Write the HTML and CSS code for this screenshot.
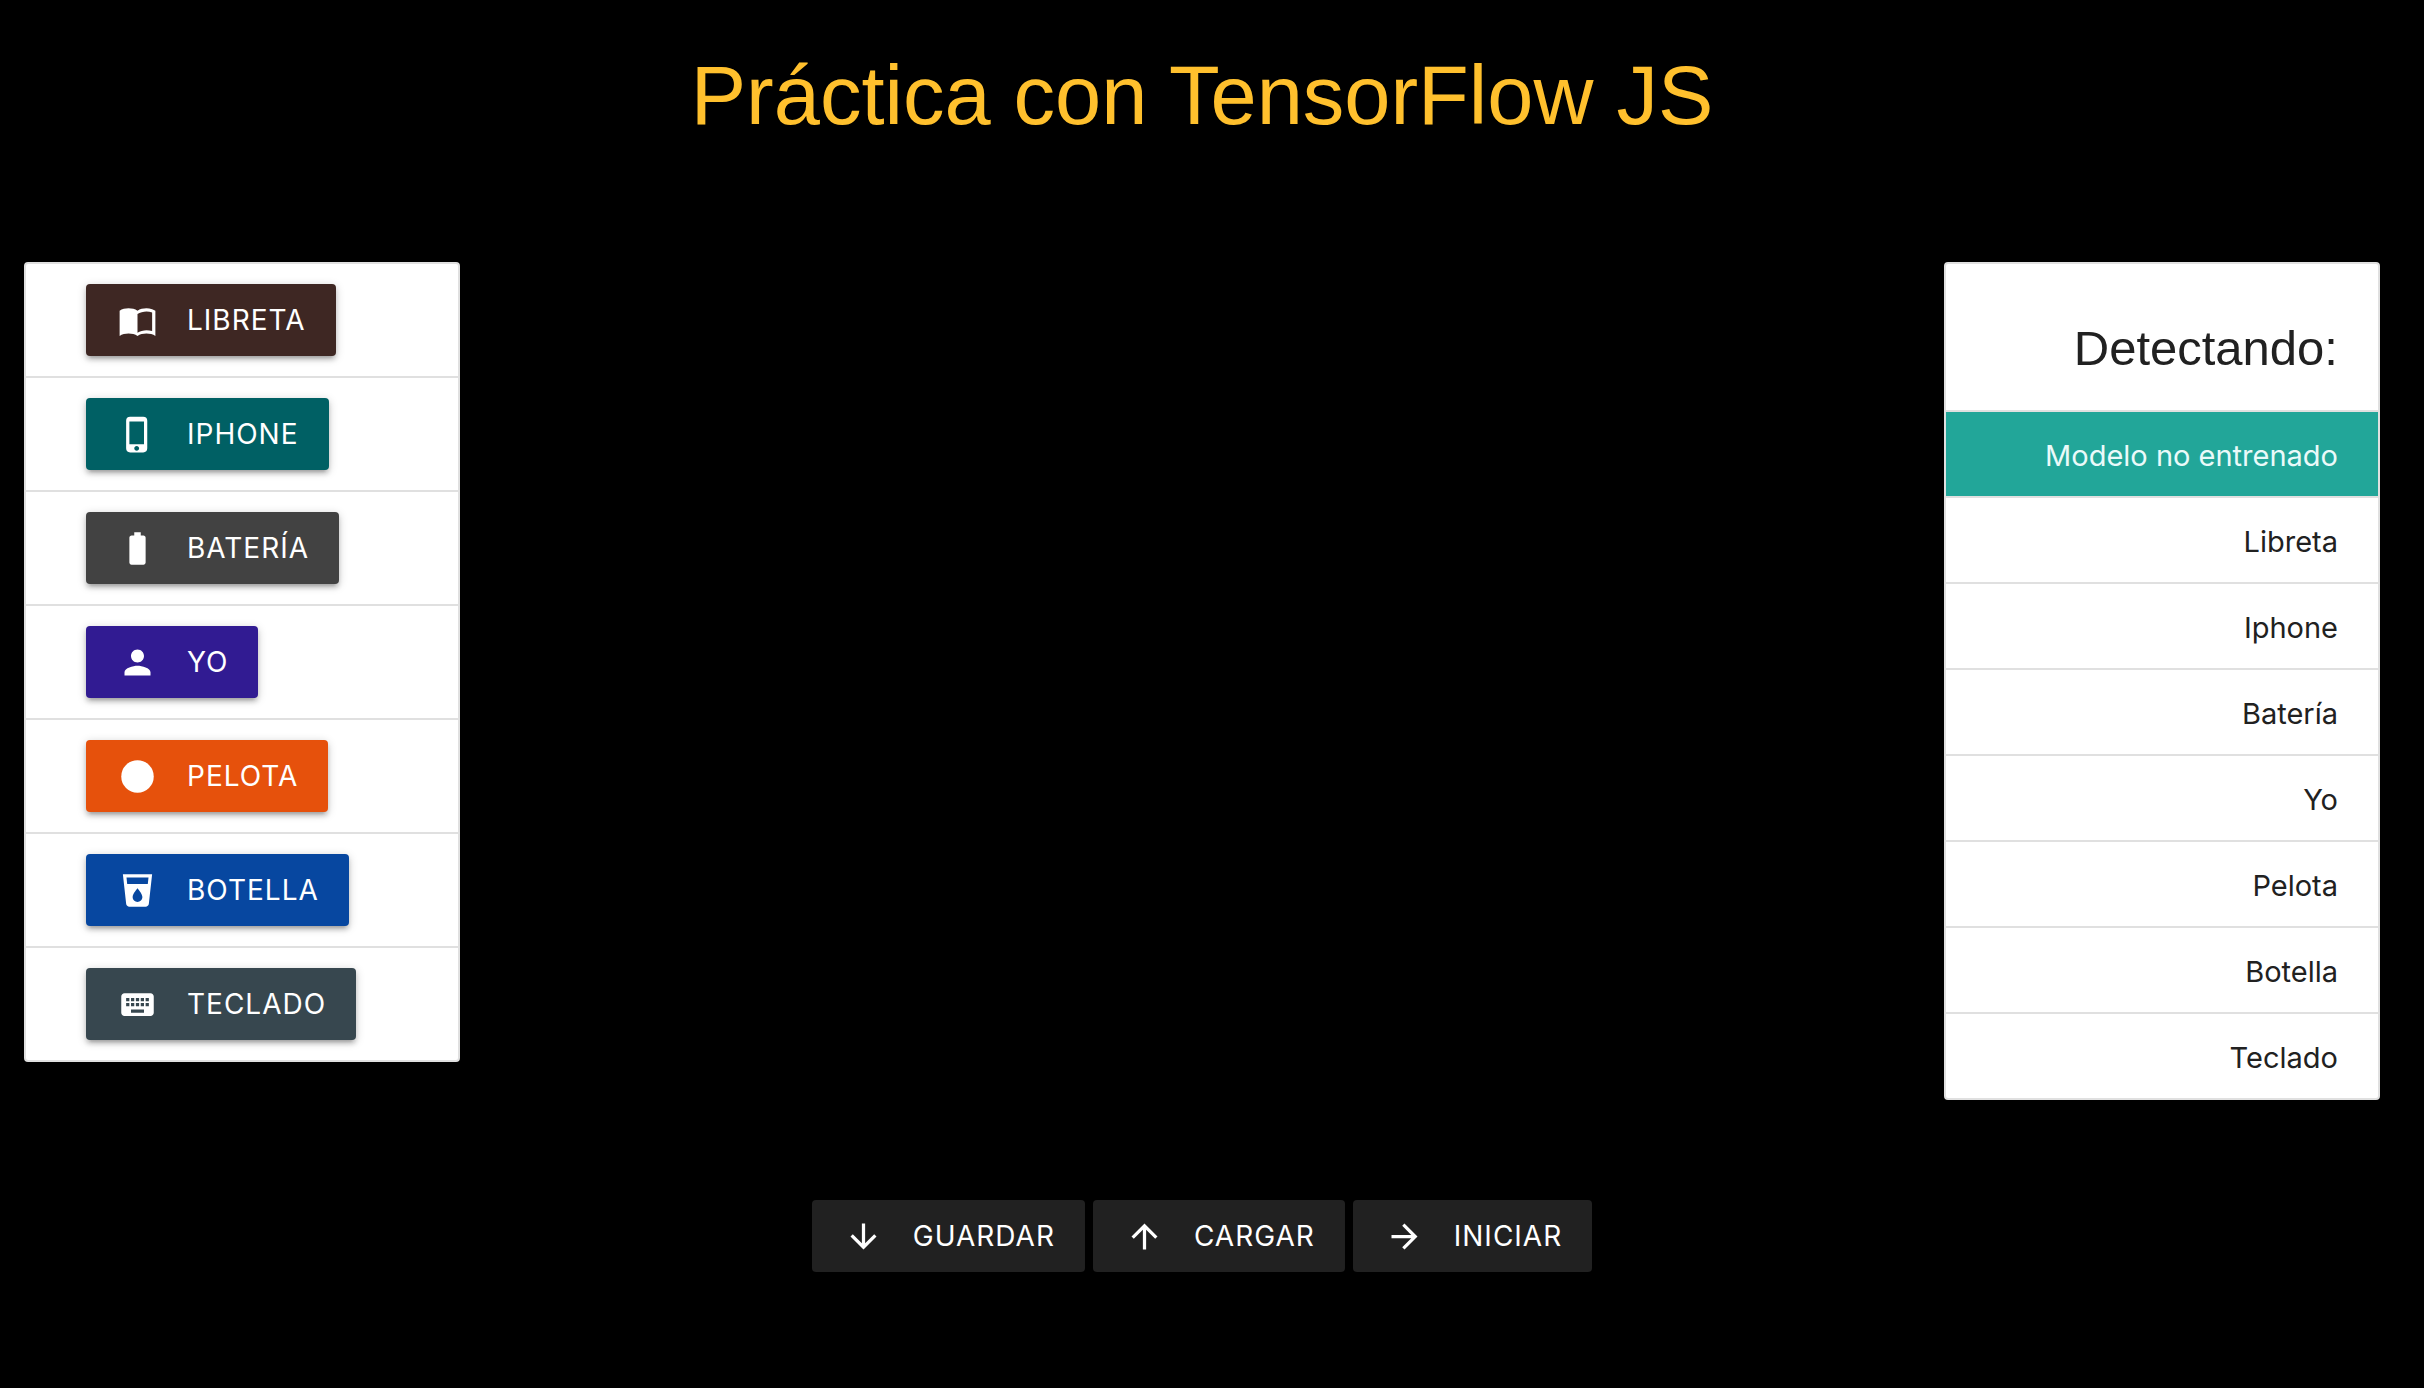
FILE: index.html
```html
<!DOCTYPE html>
<html lang="es">
<head>
<meta charset="utf-8">
<title>Práctica con TensorFlow JS</title>
<meta name="viewport" content="width=device-width, initial-scale=1">
<link rel="stylesheet" href="styles.css">
</head>
<body>
<h1 class="title">Práctica con TensorFlow JS</h1>
<main class="row">
  <ul class="collection">
    <li class="collection-item"><button class="btn brown" type="button"><svg class="icon" viewBox="0 0 24 24" aria-hidden="true"><path fill-rule="evenodd" d="M21 5c-1.11-.35-2.33-.5-3.5-.5-1.95 0-4.05.4-5.5 1.5-1.45-1.1-3.55-1.5-5.5-1.5S2.45 4.9 1 6v15.5C2.45 20.4 4.55 20 6.5 20s4.05.4 5.5 1.5c1.45-1.1 3.55-1.5 5.5-1.5 1.95 0 4.05.4 5.5 1.5V6c-.6-.45-1.25-.75-2-1zm0 13.5c-1.1-.35-2.3-.5-3.5-.5-1.7 0-4.15.65-5.5 1.5V8c1.35-.85 3.8-1.5 5.5-1.5 1.2 0 2.4.15 3.5.5v11.5z"/></svg>Libreta</button></li>
    <li class="collection-item"><button class="btn cyan" type="button"><svg class="icon" viewBox="0 0 24 24" aria-hidden="true"><path d="M15.5 1h-8A2.5 2.5 0 0 0 5 3.5v17A2.5 2.5 0 0 0 7.500 23h8a2.500 2.500 0 0 0 2.500-2.500v-17A2.500 2.500 0 0 0 15.500 1zm-4 21c-.830 0-1.500-.670-1.500-1.500s.670-1.500 1.500-1.500 1.500.670 1.500 1.500-.670 1.500-1.500 1.500zm4.500-4H7V4h9v14z"/></svg>Iphone</button></li>
    <li class="collection-item"><button class="btn grey" type="button"><svg class="icon" viewBox="0 0 24 24" aria-hidden="true"><path d="M15.670 4H14V2h-4v2H8.330C7.600 4 7 4.600 7 5.330v15.330C7 21.400 7.600 22 8.330 22h7.330c.740 0 1.340-.600 1.340-1.330V5.330C17 4.600 16.400 4 15.670 4z"/></svg>Batería</button></li>
    <li class="collection-item"><button class="btn purple" type="button"><svg class="icon" viewBox="0 0 24 24" aria-hidden="true"><path d="M12 12c2.210 0 4-1.790 4-4s-1.790-4-4-4-4 1.790-4 4 1.790 4 4 4zm0 2c-2.670 0-8 1.340-8 4v2h16v-2c0-2.660-5.330-4-8-4z"/></svg>Yo</button></li>
    <li class="collection-item"><button class="btn orange" type="button"><svg class="icon" viewBox="0 0 24 24" aria-hidden="true"><circle cx="12" cy="12" r="10"/></svg>Pelota</button></li>
    <li class="collection-item"><button class="btn blue" type="button"><svg class="icon" viewBox="0 0 24 24" aria-hidden="true"><path d="M3 2l2.010 18.230C5.130 21.230 5.970 22 7 22h10c1.030 0 1.870-.770 1.990-1.770L21 2H3zm9 17c-1.660 0-3-1.340-3-3 0-2 3-5.400 3-5.400s3 3.400 3 5.400c0 1.660-1.340 3-3 3zm6.330-11H5.670l-.440-4h13.540l-.440 4z"/></svg>Botella</button></li>
    <li class="collection-item"><button class="btn slate" type="button"><svg class="icon" viewBox="0 0 24 24" aria-hidden="true"><path d="M20 5H4c-1.100 0-1.990.900-1.990 2L2 17c0 1.100.900 2 2 2h16c1.100 0 2-.900 2-2V7c0-1.100-.900-2-2-2zm-9 3h2v2h-2V8zm0 3h2v2h-2v-2zM8 8h2v2H8V8zm0 3h2v2H8v-2zm-1 2H5v-2h2v2zm0-3H5V8h2v2zm9 7H8v-2h8v2zm0-4h-2v-2h2v2zm0-3h-2V8h2v2zm3 3h-2v-2h2v2zm0-3h-2V8h2v2z"/></svg>Teclado</button></li>
  </ul>
  <ul class="collection results">
    <li class="result-head"><h2 class="subtitle">Detectando:</h2></li>
    <li class="result active">Modelo no entrenado</li>
    <li class="result">Libreta</li>
    <li class="result">Iphone</li>
    <li class="result">Batería</li>
    <li class="result">Yo</li>
    <li class="result">Pelota</li>
    <li class="result">Botella</li>
    <li class="result">Teclado</li>
  </ul>
</main>
<footer class="actions">
  <button class="btn dark" type="button"><svg class="icon" viewBox="0 0 24 24" aria-hidden="true"><path d="M20 12l-1.410-1.410L13 16.170V4h-2v12.170l-5.580-5.590L4 12l8 8 8-8z"/></svg>Guardar</button>
  <button class="btn dark" type="button"><svg class="icon" viewBox="0 0 24 24" aria-hidden="true"><path d="M4 12l1.410 1.410L11 7.830V20h2V7.830l5.580 5.590L20 12l-8-8-8 8z"/></svg>Cargar</button>
  <button class="btn dark" type="button"><svg class="icon" viewBox="0 0 24 24" aria-hidden="true"><path d="M12 4l-1.410 1.410L16.170 11H4v2h12.170l-5.580 5.590L12 20l8-8z"/></svg>Iniciar</button>
</footer>
</body>
</html>
```
FILE: styles.css
```css
* { box-sizing: border-box; }
body {
  margin: 0;
  padding: 40px 44px 0 24px;
  background: #000;
  color: #212121;
  font-family: Inter, "Liberation Sans", sans-serif;
  font-size: 29px;
}
.title,
.subtitle {
  margin: 0;
  font-family: "Liberation Sans", Arial, sans-serif;
  font-weight: 400;
}
.title {
  color: #ffc02d;
  font-size: 83px;
  line-height: 112px;
  text-align: center;
}
.row {
  display: flex;
  justify-content: space-between;
  align-items: flex-start;
  margin-top: 110px;
}
.collection {
  width: 436px;
  margin: 0;
  padding: 0;
  list-style: none;
  background: #fff;
  border: 2px solid #e0e0e0;
  border-radius: 4px;
  overflow: hidden;
}
.collection > li { border-bottom: 2px solid #e0e0e0; }
.collection > li:last-child { border-bottom: 0; }
.collection-item { padding: 20px 60px; }
.btn {
  display: flex;
  align-items: center;
  height: 72px;
  padding: 0 30px 0 32px;
  border: 0;
  border-radius: 4px;
  color: #fff;
  font: inherit;
  font-size: 28px;
  letter-spacing: 1px;
  text-transform: uppercase;
  box-shadow: 0 4px 4px rgba(0, 0, 0, .14), 0 6px 2px -4px rgba(0, 0, 0, .12), 0 2px 10px rgba(0, 0, 0, .2);
  cursor: pointer;
}
.icon {
  width: 39px;
  height: 39px;
  margin-right: 30px;
  fill: currentColor;
}
.brown { background: #3e2723; }
.cyan { background: #006064; }
.grey { background: #424242; }
.purple { background: #311b92; }
.orange { background: #e6510c; }
.blue { background: #0747a0; }
.slate { background: #37474f; }
.dark { background: #212121; }
.results { text-align: right; }
.result-head { padding: 58px 40px 36px; }
.subtitle {
  font-size: 49px;
  line-height: 52px;
}
.result {
  padding: 22px 40px 18px;
  line-height: 44px;
}
.active {
  background: #22a699;
  color: #eafaf9;
}
.actions {
  display: flex;
  justify-content: center;
  gap: 8px;
  margin-top: 100px;
}
```
